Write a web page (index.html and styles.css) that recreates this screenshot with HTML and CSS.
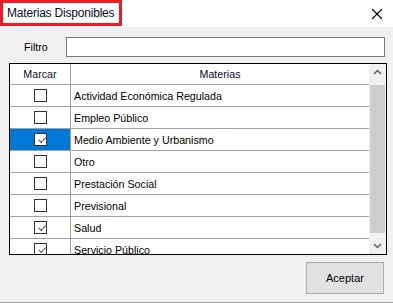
FILE: index.html
```html
<!DOCTYPE html>
<html>

<head>
  <title>Materias Disponibles</title>
  <link rel="stylesheet" href="styles.css">
</head>

<body>
  <div class="window">
    <div class="titlebar">
      <span class="title">Materias Disponibles</span>
      <svg class="close" width="12" height="12" viewBox="0 0 12 12">
        <path d="M1 1 L11 11 M11 1 L1 11" stroke="#000" stroke-width="1.1" fill="none" />
      </svg>
    </div>

    <div class="filter">
      <label for="filtro">Filtro</label>
      <input type="text" id="filtro" />
    </div>

    <div class="grid">
      <div class="grid-body">
        <div class="row head">
          <div class="cell mark">Marcar</div>
          <div class="cell name center">Materias</div>
        </div>
        <div class="row">
          <div class="cell mark"><span class="check"></span></div>
          <div class="cell name">Actividad Económica Regulada</div>
        </div>
        <div class="row">
          <div class="cell mark"><span class="check"></span></div>
          <div class="cell name">Empleo Público</div>
        </div>
        <div class="row selected">
          <div class="cell mark"><span class="check on"></span></div>
          <div class="cell name">Medio Ambiente y Urbanismo</div>
        </div>
        <div class="row">
          <div class="cell mark"><span class="check"></span></div>
          <div class="cell name">Otro</div>
        </div>
        <div class="row">
          <div class="cell mark"><span class="check"></span></div>
          <div class="cell name">Prestación Social</div>
        </div>
        <div class="row">
          <div class="cell mark"><span class="check"></span></div>
          <div class="cell name">Previsional</div>
        </div>
        <div class="row">
          <div class="cell mark"><span class="check on"></span></div>
          <div class="cell name">Salud</div>
        </div>
        <div class="row">
          <div class="cell mark"><span class="check on"></span></div>
          <div class="cell name">Servicio Público</div>
        </div>
      </div>
      <div class="scrollbar">
        <svg class="arrow" width="17" height="17" viewBox="0 0 17 17">
          <path d="M5 10 L8.5 6.5 L12 10" stroke="#606060" stroke-width="1.5" fill="none" />
        </svg>
        <div class="thumb"></div>
        <svg class="arrow" width="17" height="17" viewBox="0 0 17 17">
          <path d="M5 7 L8.5 10.5 L12 7" stroke="#606060" stroke-width="1.5" fill="none" />
        </svg>
      </div>
    </div>

    <div class="actions">
      <button type="button">Aceptar</button>
    </div>
  </div>
</body>

</html>
```

FILE: styles.css
```css
body {
  margin: 0;
  font-family: "Liberation Sans", Arial, sans-serif;
  font-size: 10.7px;
  color: #000;
}

.window {
  width: 393px;
  height: 303px;
  background: #f0f0f0;
  display: flex;
  flex-direction: column;
  box-sizing: border-box;
  border-bottom: 1px solid #a0a0a0;
}

.titlebar {
  height: 27px;
  background: #fff;
  display: flex;
  align-items: center;
  justify-content: space-between;
  flex-shrink: 0;
}

.title {
  box-sizing: border-box;
  width: 122px;
  height: 26px;
  margin-bottom: 1px;
  border: 3px solid #ed1c24;
  padding: 3px 0 0 4px;
  white-space: nowrap;
  overflow: hidden;
  font-family: "Liberation Sans", Arial, sans-serif;
  font-size: 12px;
  letter-spacing: -0.2px;
  color: #0b0b2e;
}

.close {
  margin-right: 10px;
}

.filter {
  display: flex;
  align-items: center;
  height: 20px;
  margin-top: 10px;
  padding-left: 24px;
}

.filter label {
  width: 42px;
}

.filter input {
  box-sizing: border-box;
  width: 319px;
  height: 20px;
  border: 1px solid #7a7a7a;
  background: #fff;
  padding: 0 3px;
  font: inherit;
}

.grid {
  box-sizing: border-box;
  margin: 6px 0 0 9px;
  width: 378px;
  height: 192px;
  border: 1px solid #000;
  background: #fff;
  display: flex;
  overflow: hidden;
}

.grid-body {
  flex: 1;
  overflow: hidden;
}

.row {
  display: flex;
  height: 22px;
  border-bottom: 1px solid #a0a0a0;
  box-sizing: border-box;
}

.row.head {
  height: 21px;
  color: #0b0b2e;
}

.cell {
  display: flex;
  align-items: center;
  box-sizing: border-box;
}

.mark {
  width: 61px;
  border-right: 1px solid #a0a0a0;
  justify-content: center;
}

.name {
  flex: 1;
  padding-left: 3px;
}

.center {
  justify-content: center;
}

.head .name {
  padding-left: 0;
}

.selected .mark {
  background: #0078d7;
}

.check {
  box-sizing: border-box;
  width: 13px;
  height: 13px;
  border: 1px solid #333;
  background: #fff;
  position: relative;
}

.check.on::after {
  content: "";
  position: absolute;
  left: 3px;
  top: 1px;
  width: 6px;
  height: 3px;
  border-left: 1.2px solid #555;
  border-bottom: 1.2px solid #555;
  transform: rotate(-45deg) translate(-1px, 2px);
}

.scrollbar {
  width: 17px;
  background: #f0f0f0;
  display: flex;
  flex-direction: column;
  flex-shrink: 0;
}

.arrow {
  flex-shrink: 0;
}

.thumb {
  flex: 1;
  margin: 4px 1px;
  background: #cdcdcd;
}

.actions {
  display: flex;
  justify-content: flex-end;
  padding: 7px 9px 0 0;
}

button[type="button"] {
  width: 78px;
  height: 32px;
  background: #e1e1e1;
  border: 1px solid #adadad;
  font-family: "Liberation Sans", Arial, sans-serif;
  font-size: 11px;
  color: #000;
}
```
